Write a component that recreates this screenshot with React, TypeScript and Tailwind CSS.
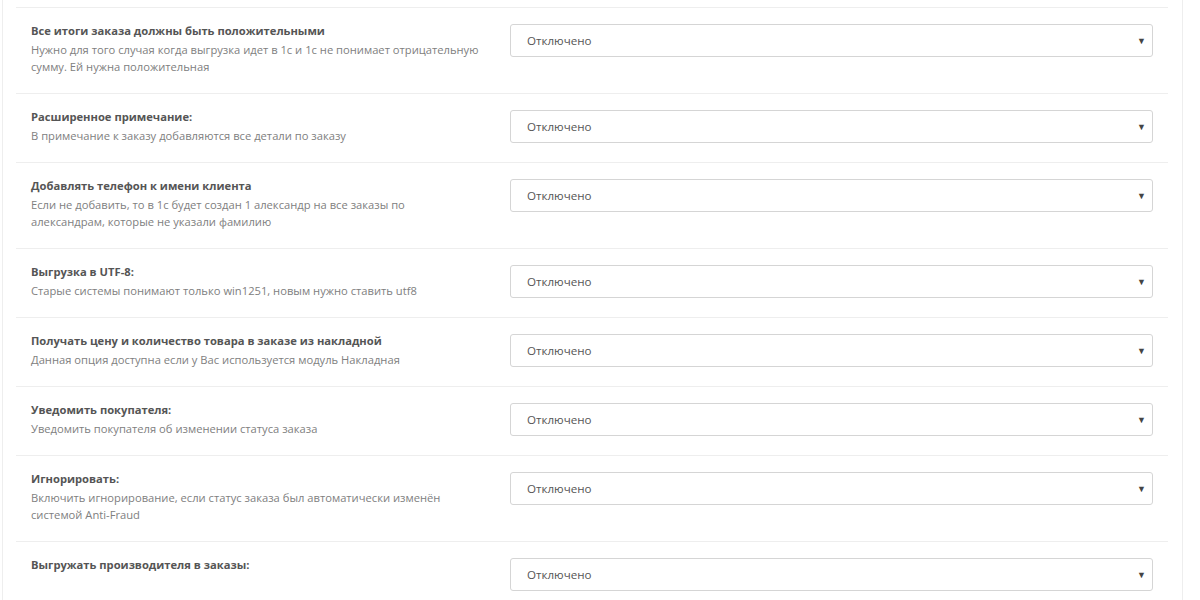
const rows: { title: string; help?: string }[] = [
  {
    title: "Все итоги заказа должны быть положительными",
    help: "Нужно для того случая когда выгрузка идет в 1с и 1с не понимает отрицательную сумму. Ей нужна положительная",
  },
  {
    title: "Расширенное примечание:",
    help: "В примечание к заказу добавляются все детали по заказу",
  },
  {
    title: "Добавлять телефон к имени клиента",
    help: "Если не добавить, то в 1с будет создан 1 александр на все заказы по александрам, которые не указали фамилию",
  },
  {
    title: "Выгрузка в UTF-8:",
    help: "Старые системы понимают только win1251, новым нужно ставить utf8",
  },
  {
    title: "Получать цену и количество товара в заказе из накладной",
    help: "Данная опция доступна если у Вас используется модуль Накладная",
  },
  {
    title: "Уведомить покупателя:",
    help: "Уведомить покупателя об изменении статуса заказа",
  },
  {
    title: "Игнорировать:",
    help: "Включить игнорирование, если статус заказа был автоматически изменён системой Anti-Fraud",
  },
  {
    title: "Выгружать производителя в заказы:",
  },
];

function SelectBox() {
  return (
    <div className="flex h-[33px] items-center justify-between rounded-[3px] border border-[#d5d5d5] bg-white pl-[16px] pr-[6px] text-[11.6px] text-[#555]">
      <span>Отключено</span>
      <span className="text-[9px] leading-none text-[#444]">▼</span>
    </div>
  );
}

export default function App() {
  return (
    <div className="h-[600px] w-[1200px] overflow-hidden bg-white font-['Open_Sans',sans-serif]">
      <div className="ml-[2px] mr-[17px] h-full border-x border-[#eee] pl-[13px] pr-[14px] pt-[7px]">
        {rows.map((r) => (
          <div key={r.title} className="flex border-t border-[#eee] pt-4 pb-[18px]">
            <div className="w-[479px] shrink-0 px-[15px] text-[11.2px]">
              <div className="mb-[4px] font-bold leading-[13px] text-[#555]">{r.title}</div>
              {r.help && <div className="leading-[17px] text-[#808080]">{r.help}</div>}
            </div>
            <div className="flex-1 px-[15px]">
              <SelectBox />
            </div>
          </div>
        ))}
      </div>
    </div>
  );
}
